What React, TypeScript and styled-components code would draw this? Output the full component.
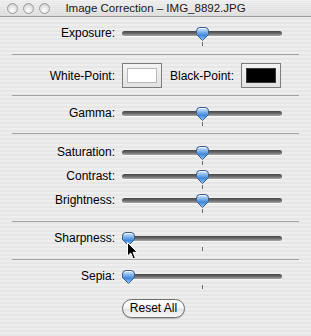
import React from 'react';
import styled, { createGlobalStyle } from 'styled-components';

const GlobalStyle = createGlobalStyle`
  html, body {
    margin: 0;
    padding: 0;
    background: #ececec;
  }
  body {
    font-family: "Liberation Sans", Arial, sans-serif;
    font-size: 12px;
    color: #000;
  }
`;

const Window = styled.div`
  width: 311px;
  height: 336px;
  overflow: hidden;
  background: repeating-linear-gradient(180deg, #eeeeee 0px, #eeeeee 2px, #e6e6e6 2px, #e6e6e6 4px);
`;

const TitleBar = styled.div`
  height: 16px;
  display: grid;
  grid-template-columns: 1fr auto 1fr;
  align-items: center;
  border-bottom: 1px solid #9a9a9a;
  background:
    repeating-linear-gradient(180deg, rgba(255,255,255,0.25) 0px, rgba(255,255,255,0.25) 1px, transparent 1px, transparent 2px),
    linear-gradient(180deg, #ececec 0%, #dadada 100%);
`;

const Lights = styled.div`
  display: flex;
  gap: 5px;
  padding-left: 7px;
`;

const Light = styled.span`
  width: 9px;
  height: 9px;
  border-radius: 50%;
  border: 1px solid #9c9c9c;
  background: radial-gradient(circle at 50% 70%, #ffffff 0%, #e8e8e8 45%, #c4c4c4 100%);
`;

const Title = styled.div`
  font-size: 11.5px;
  color: #1a1a1a;
  white-space: nowrap;
  line-height: 16px;
`;

const Body = styled.div`
  padding: 0 12px;
`;

const Section = styled.div<{ $top: number; $bottom: number }>`
  padding-top: ${p => p.$top}px;
  padding-bottom: ${p => p.$bottom}px;
`;

const Divider = styled.div`
  height: 1px;
  background: #a2a2a2;
`;

const Row = styled.div`
  display: grid;
  grid-template-columns: 103px 160px;
  column-gap: 7px;
  height: 24px;
  align-items: center;
`;

const Label = styled.span`
  text-align: right;
  white-space: nowrap;
  line-height: 24px;
`;

const SliderBox = styled.div`
  position: relative;
  height: 24px;
`;

const Track = styled.div`
  margin-top: 10px;
  height: 5px;
  border-radius: 3px;
  background: linear-gradient(180deg, #464646 0%, #666666 45%, #a8a8a8 100%);
  box-shadow: 0 1px 0 rgba(255, 255, 255, 0.6);
`;

const Tick = styled.div`
  position: absolute;
  left: 80px;
  top: 21px;
  width: 1px;
  height: 4px;
  background: #6e6e6e;
`;

const ThumbSvg = styled.svg`
  position: absolute;
  top: 6px;
  width: 13px;
  height: 15px;
  overflow: visible;
`;

const CursorSvg = styled.svg`
  position: absolute;
  left: 5px;
  top: 16px;
  width: 12px;
  height: 18px;
  overflow: visible;
`;

const WellRow = styled.div`
  display: flex;
  align-items: center;
  height: 25px;
`;

const WellLabel = styled.span<{ $width?: number; $gapLeft?: number }>`
  width: ${p => (p.$width ? `${p.$width}px` : 'auto')};
  margin-left: ${p => p.$gapLeft ?? 0}px;
  text-align: right;
  white-space: nowrap;
`;

const Well = styled.div`
  margin-left: 7px;
  width: 38px;
  height: 23px;
  border: 1px solid #7c7c7c;
  background: linear-gradient(180deg, #f4f4f4 0%, #e2e2e2 100%);
  display: flex;
  align-items: center;
  justify-content: center;
`;

const Swatch = styled.div<{ $color: string; $edge: string }>`
  width: 28px;
  height: 13px;
  background: ${p => p.$color};
  border: 1px solid ${p => p.$edge};
`;

const ButtonRow = styled.div`
  padding-left: 110px;
`;

const PillButton = styled.button`
  width: 63px;
  height: 19px;
  padding: 0;
  border-radius: 10px;
  border: 1px solid #6f6f6f;
  background: linear-gradient(180deg, #ffffff 0%, #f6f6f6 45%, #e4e4e4 55%, #f8f8f8 100%);
  box-shadow: 0 1px 1px rgba(0, 0, 0, 0.2);
  font-family: "Liberation Sans", Arial, sans-serif;
  font-size: 12px;
  color: #000;
  line-height: 17px;
`;

const Thumb: React.FC<{ value: number; id: string }> = ({ value, id }) => (
  <ThumbSvg viewBox="0 0 13 15" style={{ left: `${value * 147}px` }}>
    <defs>
      <linearGradient id={id} x1="0" y1="0" x2="0" y2="1">
        <stop offset="0" stopColor="#dcecfb" />
        <stop offset="0.35" stopColor="#7fb4ea" />
        <stop offset="0.6" stopColor="#3f86da" />
        <stop offset="1" stopColor="#9fd2fb" />
      </linearGradient>
    </defs>
    <path
      d="M0.5,4 Q0.5,0.5 4,0.5 H9 Q12.5,0.5 12.5,4 V7.5 L6.5,13.5 L0.5,7.5 Z"
      fill={`url(#${id})`}
      stroke="#3b5d8c"
      strokeWidth="1"
    />
    <path d="M2.5,2.6 Q3,1.6 4.5,1.6 H8.5 Q10,1.6 10.5,2.6" stroke="#ffffff" strokeOpacity="0.8" fill="none" />
  </ThumbSvg>
);

const Cursor: React.FC = () => (
  <CursorSvg viewBox="0 0 12 18">
    <path
      d="M0.5,0.5 L0.5,14 L3.7,11 L6.2,16.8 L8.4,15.8 L6,10.3 L10.3,10.3 Z"
      fill="#000"
      stroke="#fff"
      strokeWidth="1"
      strokeLinejoin="round"
    />
  </CursorSvg>
);

type SliderProps = { label: string; value: number; cursor?: boolean };

const SliderRow: React.FC<SliderProps> = ({ label, value, cursor }) => (
  <Row>
    <Label>{label}</Label>
    <SliderBox>
      <Track />
      <Tick />
      <Thumb value={value} id={`thumb-${label.replace(/[^a-z]/gi, '')}`} />
      {cursor && <Cursor />}
    </SliderBox>
  </Row>
);

const App: React.FC = () => {
  return (
    <>
      <GlobalStyle />
      <Window>
        <TitleBar>
          <Lights>
            <Light />
            <Light />
            <Light />
          </Lights>
          <Title>Image Correction – IMG_8892.JPG</Title>
          <div />
        </TitleBar>
        <Body>
          <Section $top={4} $bottom={9}>
            <SliderRow label="Exposure:" value={0.5} />
          </Section>
          <Divider />
          <Section $top={8} $bottom={7}>
            <WellRow>
              <WellLabel $width={103}>White-Point:</WellLabel>
              <Well>
                <Swatch $color="#ffffff" $edge="#b8b8b8" />
              </Well>
              <WellLabel $gapLeft={8}>Black-Point:</WellLabel>
              <Well>
                <Swatch $color="#000000" $edge="#3a3a3a" />
              </Well>
            </WellRow>
          </Section>
          <Divider />
          <Section $top={5} $bottom={8}>
            <SliderRow label="Gamma:" value={0.5} />
          </Section>
          <Divider />
          <Section $top={6} $bottom={9}>
            <SliderRow label="Saturation:" value={0.5} />
            <SliderRow label="Contrast:" value={0.5} />
            <SliderRow label="Brightness:" value={0.5} />
          </Section>
          <Divider />
          <Section $top={4} $bottom={9}>
            <SliderRow label="Sharpness:" value={0} cursor />
          </Section>
          <Divider />
          <Section $top={4} $bottom={11}>
            <SliderRow label="Sepia:" value={0} />
          </Section>
          <ButtonRow>
            <PillButton>Reset All</PillButton>
          </ButtonRow>
        </Body>
      </Window>
    </>
  );
};

export default App;
